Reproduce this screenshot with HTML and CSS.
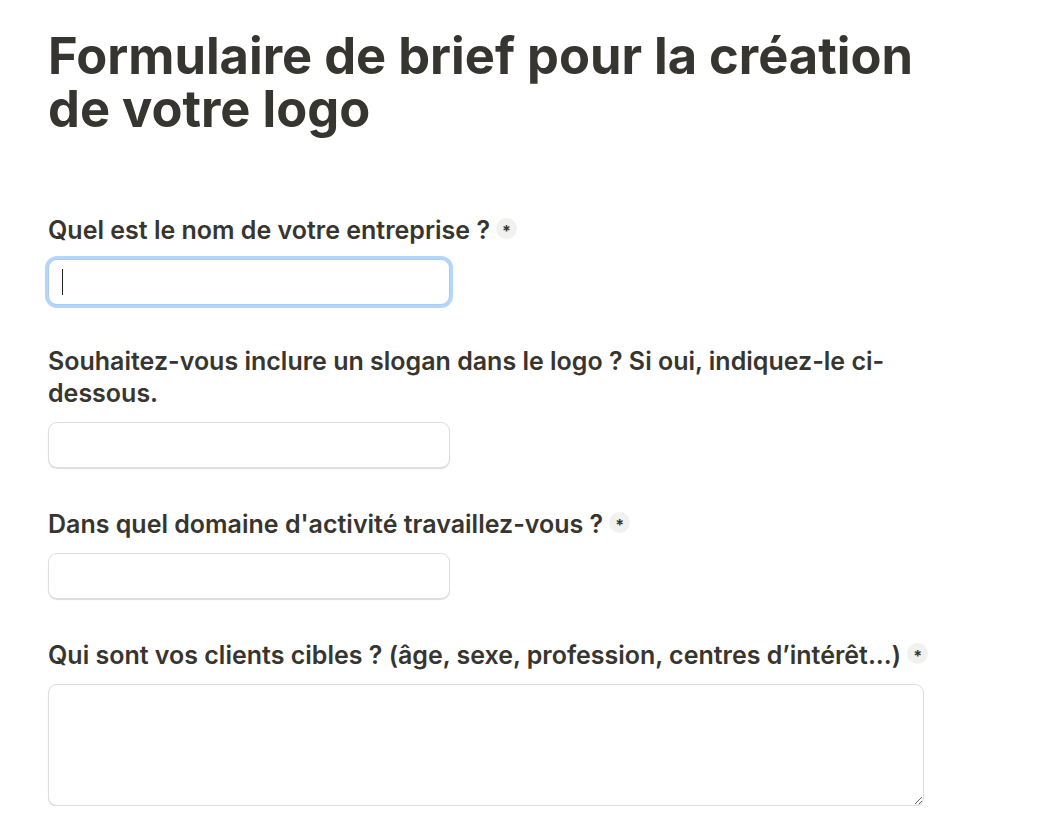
FILE: index.html
```html
<!DOCTYPE html>
<html lang="fr">
<head>
<meta charset="utf-8">
<title>Formulaire de brief pour la création de votre logo</title>
<link rel="stylesheet" href="styles.css">
</head>
<body>
<main class="page">
  <h1 class="title">Formulaire de brief pour la création de votre logo</h1>
  <form class="form">
    <div class="field">
      <label class="label" for="q1">Quel est le nom de votre entreprise ?<span class="req">*</span></label>
      <div class="input-wrap">
        <input id="q1" class="input focused" type="text">
        <span class="caret"></span>
      </div>
    </div>
    <div class="field">
      <label class="label" for="q2">Souhaitez-vous inclure un slogan dans le logo ? Si oui, indiquez-le ci-dessous.</label>
      <input id="q2" class="input" type="text">
    </div>
    <div class="field">
      <label class="label" for="q3">Dans quel domaine d'activité travaillez-vous ?<span class="req">*</span></label>
      <input id="q3" class="input" type="text">
    </div>
    <div class="field">
      <label class="label" for="q4">Qui sont vos clients cibles ? (âge, sexe, profession, centres d’intérêt...)<span class="req">*</span></label>
      <textarea id="q4" class="textarea"></textarea>
    </div>
  </form>
</main>
</body>
</html>
```

FILE: styles.css
```css
html, body {
  margin: 0;
  padding: 0;
  background: #ffffff;
}
body {
  font-family: Inter, "Noto Sans", sans-serif;
  color: #37352f;
}
.page {
  width: 876px;
  padding: 29px 0 0 48px;
}
.title {
  margin: 0;
  font-size: 50.6px;
  line-height: 53px;
  font-weight: 700;
  letter-spacing: 0;
}
.form {
  display: flex;
  flex-direction: column;
  gap: 40px;
  padding-top: 79px;
}
.field {
  display: flex;
  flex-direction: column;
  gap: 13px;
}
.label {
  font-size: 25px;
  line-height: 32px;
  font-weight: 600;
  display: block;
  margin-right: -14px;
}
.req {
  display: inline-flex;
  align-items: center;
  justify-content: center;
  width: 21px;
  height: 21px;
  margin-left: 6px;
  border-radius: 50%;
  background: #f1f1ef;
  font-size: 16px;
  line-height: 1;
  font-weight: 700;
  vertical-align: 2px;
  padding-top: 5px;
  box-sizing: border-box;
}
.input-wrap {
  position: relative;
  width: 402px;
}
.input {
  box-sizing: border-box;
  width: 402px;
  height: 46px;
  border: 1px solid #dedede;
  border-radius: 9px;
  box-shadow: 0 1px 1px rgba(0,0,0,0.14);
  background: #fff;
  font: inherit;
  font-size: 20px;
  padding: 0 14px;
  outline: none;
  margin: 0;
  display: block;
}
.input.focused {
  border-color: #a9cdf6;
  box-shadow: 0 0 0 3px #b5d6fb;
}
.caret {
  position: absolute;
  left: 14px;
  top: 10px;
  width: 1px;
  height: 26px;
  background: #222;
}
.textarea {
  box-sizing: border-box;
  width: 876px;
  height: 122px;
  border: 1px solid #dedede;
  border-radius: 9px;
  box-shadow: 0 1px 1px rgba(0,0,0,0.14);
  background: #fff;
  font: inherit;
  font-size: 20px;
  padding: 10px 14px;
  outline: none;
  margin: 0;
  resize: vertical;
  display: block;
}
```
